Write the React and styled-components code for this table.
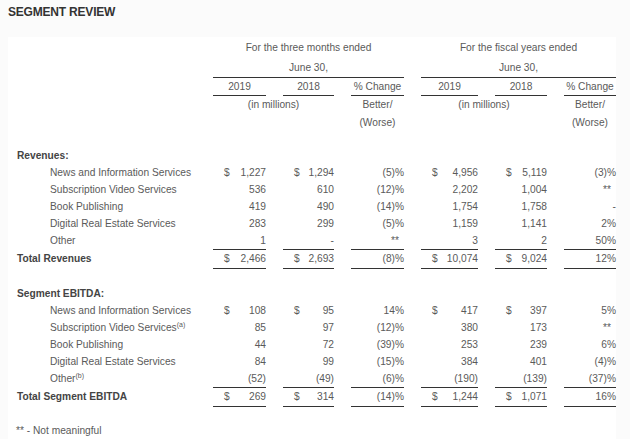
import React from "react";
import styled, { createGlobalStyle } from "styled-components";

const GlobalStyle = createGlobalStyle`
  html, body {
    margin: 0;
    padding: 0;
    background: #fbfbfb;
  }
  body {
    font-family: "Liberation Sans", Arial, sans-serif;
    color: #5a5a5a;
  }
`;

const revenues = [
  { label: "News and Information Services", cells: [["$", "1,227"], ["$", "1,294"], "(5)%", ["$", "4,956"], ["$", "5,119"], "(3)%"] },
  { label: "Subscription Video Services", cells: ["536", "610", "(12)%", "2,202", "1,004", "**"] },
  { label: "Book Publishing", cells: ["419", "490", "(14)%", "1,754", "1,758", "-"] },
  { label: "Digital Real Estate Services", cells: ["283", "299", "(5)%", "1,159", "1,141", "2%"] },
  { label: "Other", cells: ["1", "-", "**", "3", "2", "50%"] },
];

const ebitda = [
  { label: "News and Information Services", cells: [["$", "108"], ["$", "95"], "14%", ["$", "417"], ["$", "397"], "5%"] },
  { label: "Subscription Video Services", note: "(a)", cells: ["85", "97", "(12)%", "380", "173", "**"] },
  { label: "Book Publishing", cells: ["44", "72", "(39)%", "253", "239", "6%"] },
  { label: "Digital Real Estate Services", cells: ["84", "99", "(15)%", "384", "401", "(4)%"] },
  { label: "Other", note: "(b)", cells: ["(52)", "(49)", "(6)%", "(190)", "(139)", "(37)%"] },
];

const Page = styled.div`
  width: 630px;
  padding: 0 14px 0 8px;
  box-sizing: border-box;
`;

const Title = styled.h2`
  margin: 0;
  height: 37px;
  padding-top: 5px;
  box-sizing: border-box;
  font-size: 12px;
  font-weight: bold;
  letter-spacing: -0.2px;
  color: #333;
`;

const Panel = styled.div`
  background: #fff;
  padding-bottom: 4px;
`;

const Row = styled.div`
  display: grid;
  grid-template-columns: 188px 53px 51px 53px 57px 52px 52px;
  column-gap: 17px;
  font-size: 10.2px;
  line-height: ${(p) => p.$h || 17}px;
  margin-top: ${(p) => p.$gap || 0}px;
`;

const Label = styled.div`
  padding-left: ${(p) => (p.$indent ? 42 : 9)}px;
  font-weight: ${(p) => (p.$bold ? "bold" : "normal")};
  color: ${(p) => (p.$bold ? "#444" : "#5a5a5a")};
  white-space: nowrap;
`;

const Head = styled.div`
  grid-column: ${(p) => p.$span || "auto"};
  text-align: center;
  white-space: nowrap;
  border-bottom: ${(p) => (p.$line ? "1px solid #333" : "none")};
`;

const Cell = styled.div`
  display: flex;
  justify-content: ${(p) => (p.$dollar ? "space-between" : "flex-end")};
  padding-left: ${(p) => (p.$dollar ? 11 : 0)}px;
  padding-right: ${(p) => (p.$stars ? 5 : 0)}px;
  white-space: nowrap;
  border-bottom: ${(p) => (p.$bottom ? "1px solid #333" : "none")};
`;

const Sup = styled.sup`
  font-size: 7px;
  line-height: 0;
  vertical-align: 4px;
`;

const Footnote = styled.div`
  font-size: 10.2px;
  line-height: 17px;
  margin-top: 15px;
  padding-left: 8px;
`;

const Values = ({ cells, bottom }) =>
  cells.map((c, i) =>
    Array.isArray(c) ? (
      <Cell key={i} $dollar $bottom={bottom}>
        <span>{c[0]}</span>
        <span>{c[1]}</span>
      </Cell>
    ) : (
      <Cell key={i} $stars={c === "**"} $bottom={bottom}>
        {c}
      </Cell>
    )
  );

const Section = ({ title, rows, total, gap }) => (
  <>
    <Row $gap={gap}>
      <Label $bold>{title}</Label>
    </Row>
    {rows.map((r, i) => (
      <Row key={r.label}>
        <Label $indent>
          {r.label}
          {r.note && <Sup>{r.note}</Sup>}
        </Label>
        <Values cells={r.cells} bottom={i === rows.length - 1} />
      </Row>
    ))}
    <Row $h={18}>
      <Label $bold>{total.label}</Label>
      <Values cells={total.cells} bottom />
    </Row>
  </>
);

export default function App() {
  return (
    <Page>
      <GlobalStyle />
      <Title>SEGMENT REVIEW</Title>
      <Panel>
        <Row $h={21}>
          <div />
          <Head $span="2 / 5">For the three months ended</Head>
          <Head $span="5 / 8">For the fiscal years ended</Head>
        </Row>
        <Row $h={19}>
          <div />
          <Head $span="2 / 5" $line>June 30,</Head>
          <Head $span="5 / 8" $line>June 30,</Head>
        </Row>
        <Row>
          <div />
          <Head $line>2019</Head>
          <Head $line>2018</Head>
          <Head $line>% Change</Head>
          <Head $line>2019</Head>
          <Head $line>2018</Head>
          <Head $line>% Change</Head>
        </Row>
        <Row $h={18}>
          <div />
          <Head $span="2 / 4">(in millions)</Head>
          <Head>Better/</Head>
          <Head $span="5 / 7">(in millions)</Head>
          <Head>Better/</Head>
        </Row>
        <Row>
          <div />
          <div />
          <div />
          <Head>(Worse)</Head>
          <div />
          <div />
          <Head>(Worse)</Head>
        </Row>

        <Section
          title="Revenues:"
          rows={revenues}
          gap={16}
          total={{
            label: "Total Revenues",
            cells: [["$", "2,466"], ["$", "2,693"], "(8)%", ["$", "10,074"], ["$", "9,024"], "12%"],
          }}
        />

        <Section
          title="Segment EBITDA:"
          rows={ebitda}
          gap={16}
          total={{
            label: "Total Segment EBITDA",
            cells: [["$", "269"], ["$", "314"], "(14)%", ["$", "1,244"], ["$", "1,071"], "16%"],
          }}
        />

        <Footnote>** - Not meaningful</Footnote>
      </Panel>
    </Page>
  );
}
